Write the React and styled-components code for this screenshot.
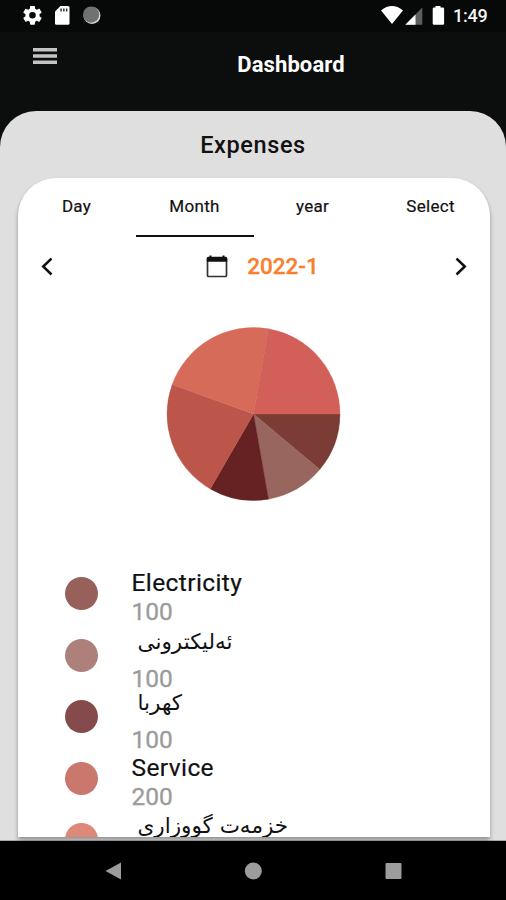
import React from "react";
import styled, { createGlobalStyle } from "styled-components";

const GlobalStyle = createGlobalStyle`
  * { box-sizing: border-box; }
  body {
    margin: 0;
    background: #0c0e0d;
    font-family: Roboto, "DejaVu Sans", sans-serif;
    overflow: hidden;
  }
`;

const Screen = styled.div`
  width: 506px;
  height: 900px;
  display: flex;
  flex-direction: column;
  background: #0c0e0d;
  overflow: hidden;
`;

const StatusBar = styled.div`
  height: 32px;
  flex: none;
  display: flex;
  justify-content: space-between;
  background: #070908;
`;

const StatusIcons = styled.svg`
  display: block;
  height: 32px;
  width: ${(p) => p.$width}px;
`;

const StatusEnd = styled.div`
  display: flex;
  padding-right: 18px;
`;

const Clock = styled.span`
  width: 35px;
  color: #f4f4f4;
  font-size: 18px;
  font-weight: 500;
  line-height: 32px;
  letter-spacing: -0.2px;
  white-space: nowrap;
`;

const Header = styled.header`
  height: 79px;
  flex: none;
  display: grid;
  grid-template-columns: 76px 1fr;
`;

const MenuButton = styled.button`
  border: 0;
  padding: 16px 0 0 33px;
  background: none;
  display: flex;
  align-items: flex-start;
`;

const Title = styled.h1`
  margin: 0;
  padding-top: 17px;
  color: #fff;
  font-size: 22px;
  line-height: 32px;
  font-weight: 700;
  letter-spacing: 0.1px;
  text-align: center;
`;

const Sheet = styled.main`
  height: 730px;
  flex: none;
  display: flex;
  flex-direction: column;
  align-items: center;
  background: #dfdfdf;
  border-radius: 36px 36px 0 0;
  border-bottom: 1px solid #a8a8a8;
`;

const SectionTitle = styled.h2`
  margin: 0;
  height: 67px;
  color: #111;
  font-size: 23.5px;
  line-height: 68px;
  font-weight: 500;
  letter-spacing: 0.6px;
`;

const Card = styled.section`
  width: 472px;
  height: 659px;
  margin-left: 1px;
  background: #fff;
  border-radius: 38px 38px 0 0;
  overflow: hidden;
  box-shadow: 0 3px 4px rgba(0, 0, 0, 0.35);
`;

const Tabs = styled.nav`
  display: grid;
  grid-template-columns: repeat(4, 1fr);
  height: 59px;
`;

const Tab = styled.button`
  border: 0;
  border-bottom: 2.5px solid ${(p) => (p.$active ? "#111" : "transparent")};
  padding: 0 0 1px;
  background: none;
  color: #111;
  font-family: inherit;
  font-size: 17px;
  line-height: 56px;
  letter-spacing: 0.3px;
  text-align: center;
  -webkit-text-stroke: 0.2px #111;
`;

const PeriodRow = styled.div`
  height: 60px;
  display: flex;
  align-items: center;
  justify-content: space-between;
  padding: 0 23px;
`;

const Period = styled.div`
  display: flex;
  align-items: center;
  gap: 19px;
  margin-left: 18px;
  color: #f77f2e;
  font-size: 22.5px;
  font-weight: 500;
`;

const PeriodLabel = styled.span`
  padding-bottom: 2px;
  -webkit-text-stroke: 0.3px #f77f2e;
`;

const Icon = styled.svg`
  display: block;
  flex: none;
`;

const ChartArea = styled.div`
  height: 265px;
  padding: 29px 0 0 148px;
`;

const Row = styled.div`
  height: 61.5px;
  display: flex;
  align-items: flex-start;
  padding-left: 47px;
`;

const Swatch = styled.span`
  width: 33px;
  height: 33px;
  margin: 15px 34px 0 0;
  flex: none;
  border-radius: 50%;
  background: ${(p) => p.$color};
`;

const RowText = styled.div`
  padding-top: 6px;
  white-space: nowrap;
`;

const Name = styled.div`
  color: #111;
  font-size: 24.5px;
  line-height: 29px;
  height: 29px;
  letter-spacing: 0.4px;
  -webkit-text-stroke: 0.2px #111;
`;

const ArabicName = styled(Name)`
  height: 34px;
  padding-left: 6px;
  font-family: "DejaVu Sans", sans-serif;
  font-size: 21.5px;
  line-height: 24px;
  letter-spacing: 0;
  -webkit-text-stroke: 0;
`;

const Amount = styled.div`
  color: #9b9b9b;
  font-size: 24.5px;
  line-height: 29px;
  -webkit-text-stroke: 0.3px #9b9b9b;
`;

const NavBar = styled.footer`
  height: 59px;
  flex: none;
  display: flex;
  align-items: center;
  justify-content: space-between;
  padding: 1px 103px 0;
  background: #000;
`;

const SLICES = [
  { share: 40, color: "#7b3c35" },
  { share: 40, color: "#99655f" },
  { share: 40, color: "#662123" },
  { share: 80, color: "#bc554a" },
  { share: 80, color: "#d56b58" },
  { share: 80, color: "#d26059" },
];

const EXPENSES = [
  { name: "Electricity", amount: 100, color: "#97605a" },
  { name: "ئەلیکترونی", amount: 100, color: "#ad807b", rtl: true },
  { name: "کهربا", amount: 100, color: "#854b4c", rtl: true },
  { name: "Service", amount: 200, color: "#ca776d" },
  { name: "خزمەت گووزاری", color: "#de8879", rtl: true },
];

function PieChart() {
  const c = 87.5;
  const r = 86.5;
  const cy = 88;
  const point = (deg) => {
    const a = (deg * Math.PI) / 180;
    return `${(c + r * Math.cos(a)).toFixed(2)} ${(cy + r * Math.sin(a)).toFixed(2)}`;
  };
  let start = 0;
  return (
    <Icon width="175" height="175" viewBox="0 0 175 175">
      {SLICES.map(({ share, color }, i) => {
        const d = `M${c} ${cy}L${point(start)}A${r} ${r} 0 0 1 ${point(start + share)}Z`;
        start += share;
        return <path key={i} d={d} fill={color} stroke={color} strokeWidth="0.4" />;
      })}
    </Icon>
  );
}

export default function App() {
  return (
    <>
      <GlobalStyle />
      <Screen>
        <StatusBar>
          <StatusIcons $width={110} viewBox="0 0 110 32">
            <g transform="translate(21.2 4) scale(0.94)" fill="#fff">
              <path d="M19.43 12.98c.04-.32.07-.64.07-.98s-.03-.66-.07-.98l2.11-1.65c.19-.15.24-.42.12-.64l-2-3.46c-.12-.22-.39-.3-.61-.22l-2.49 1c-.52-.4-1.08-.73-1.69-.98l-.38-2.65A.49.49 0 0 0 14 2h-4c-.25 0-.46.18-.49.42l-.38 2.65c-.61.25-1.17.59-1.69.98l-2.49-1c-.23-.09-.49 0-.61.22l-2 3.46c-.13.22-.07.49.12.64l2.11 1.65c-.04.32-.07.65-.07.98s.03.66.07.98l-2.11 1.65c-.19.15-.24.42-.12.64l2 3.46c.12.22.39.3.61.22l2.49-1c.52.4 1.08.73 1.69.98l.38 2.65c.03.24.24.42.49.42h4c.25 0 .46-.18.49-.42l.38-2.65c.61-.25 1.17-.59 1.69-.98l2.49 1c.23.09.49 0 .61-.22l2-3.46c.12-.22.07-.49-.12-.64zM12 15.5a3.5 3.5 0 1 1 0-7 3.5 3.5 0 0 1 0 7z" />
            </g>
            <path d="M60.5 6h7.500a1.500 1.500 0 0 1 1.500 1.500v15.700a1.500 1.500 0 0 1-1.500 1.500H56.500a1.500 1.500 0 0 1-1.500-1.500V11.500z" fill="#fff" />
            <path d="M60.300 8.500h1.500v3h-1.500zM63.100 8.500h1.500v3h-1.500zM65.900 8.500h1.500v3h-1.500z" fill="#333" />
            <circle cx="92" cy="15.500" r="8.500" fill="#d8d8d8" />
            <circle cx="91.100" cy="14.600" r="8.100" fill="#717171" />
          </StatusIcons>
          <StatusEnd>
            <StatusIcons $width={72} viewBox="381 0 72 32">
              <path d="M381 10.500Q392 1.700 403 10.500L392 24z" fill="#fff" />
              <path d="M405.300 24.800L422.300 7.500V24.800z" fill="#5e5e5e" />
              <path d="M405.300 24.800L415.500 14.400V24.800z" fill="#fff" />
              <path d="M435.500 7.500v-1.500h5v1.500h2.300a1.300 1.300 0 0 1 1.300 1.300v14.700a1.300 1.300 0 0 1-1.300 1.300h-8.800a1.300 1.300 0 0 1-1.300-1.300v-14.700a1.300 1.300 0 0 1 1.300-1.300z" fill="#fff" />
            </StatusIcons>
            <Clock>1:49</Clock>
          </StatusEnd>
        </StatusBar>
        <Header>
          <MenuButton aria-label="Menu">
            <Icon width="24" height="16" viewBox="0 0 24 16" fill="#c4c4c4">
              <path d="M0 0h24v3.500H0zM0 6.300h24v3.500H0zM0 12.600h24v3.500H0z" />
            </Icon>
          </MenuButton>
          <Title>Dashboard</Title>
        </Header>
        <Sheet>
          <SectionTitle>Expenses</SectionTitle>
          <Card>
            <Tabs>
              <Tab>Day</Tab>
              <Tab $active>Month</Tab>
              <Tab>year</Tab>
              <Tab>Select</Tab>
            </Tabs>
            <PeriodRow>
              <Icon width="12" height="18" viewBox="0 0 12 18" fill="none" stroke="#111" strokeWidth="2.500">
                <path d="M10.500 .5L2.200 8.500l8.300 8" />
              </Icon>
              <Period>
                <Icon width="22" height="24" viewBox="0 0 22 24">
                  <path d="M3.500 .5h2v2h-2zM16.500 .5h2v2h-2z" fill="#111" />
                  <rect x="1.500" y="3" width="19" height="18.500" rx="1" fill="none" stroke="#333" strokeWidth="1.700" />
                  <path d="M.8 3.300a1.500 1.500 0 0 1 1.500-1.500h17.400a1.500 1.500 0 0 1 1.500 1.500V6.800H.8z" fill="#111" />
                </Icon>
                <PeriodLabel>2022-1</PeriodLabel>
              </Period>
              <Icon width="12" height="18" viewBox="0 0 12 18" fill="none" stroke="#111" strokeWidth="2.500">
                <path d="M1.500 .5l8.300 8-8.300 8" />
              </Icon>
            </PeriodRow>
            <ChartArea>
              <PieChart />
            </ChartArea>
            {EXPENSES.map(({ name, amount, color, rtl }) => {
              const Label = rtl ? ArabicName : Name;
              return (
                <Row key={name}>
                  <Swatch $color={color} />
                  <RowText>
                    <Label>{name}</Label>
                    {amount && <Amount>{amount}</Amount>}
                  </RowText>
                </Row>
              );
            })}
          </Card>
        </Sheet>
        <NavBar>
          <Icon width="18" height="18" viewBox="0 0 18 18" fill="#9c9c9c">
            <path d="M2.500 9L18 0.500V17.500z" />
          </Icon>
          <Icon width="18" height="18" viewBox="0 0 18 18" fill="#9c9c9c">
            <circle cx="9.300" cy="9" r="8.500" />
          </Icon>
          <Icon width="18" height="18" viewBox="0 0 18 18" fill="#9c9c9c">
            <rect x="0.500" y="1" width="16" height="16" rx="1" />
          </Icon>
        </NavBar>
      </Screen>
    </>
  );
}
